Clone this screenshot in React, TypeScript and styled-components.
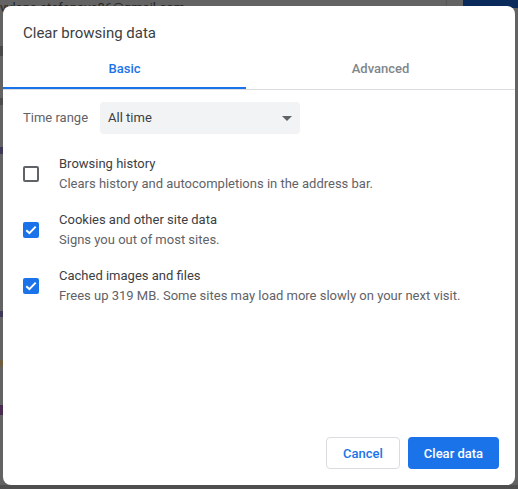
import React from 'react'
import styled, { createGlobalStyle } from 'styled-components'

const GlobalStyle = createGlobalStyle`
  html, body {
    margin: 0;
    padding: 0;
    background: #636363;
  }
  body {
    font-family: Roboto, "Liberation Sans", sans-serif;
  }
`

const items = [
  { title: 'Browsing history', text: 'Clears history and autocompletions in the address bar.', checked: false },
  { title: 'Cookies and other site data', text: 'Signs you out of most sites.', checked: true },
  { title: 'Cached images and files', text: 'Frees up 319 MB. Some sites may load more slowly on your next visit.', checked: true },
]

// bits of the page behind the dialog that show along the left edge
const edgeMarks = [
  { top: 46, height: 10, color: '#4a4a4a' },
  { top: 98, height: 7, color: '#4c4c4c' },
  { top: 147, height: 7, color: '#3f3858' },
  { top: 311, height: 6, color: '#3f3858' },
  { top: 360, height: 7, color: '#6e5f40' },
  { top: 405, height: 10, color: '#4a2c50' },
]

const App = () => {
  return (
    <Page>
      <GlobalStyle />
      <BehindEmail>vylana.stefanova86@gmail.com</BehindEmail>
      <BehindDivider />
      <BehindButton />
      {edgeMarks.map((m) => (
        <EdgeMark key={m.top} $top={m.top} $height={m.height} $color={m.color} />
      ))}
      <Dialog>
        <Title>Clear browsing data</Title>
        <Tabs>
          <Tab $active $width={243}>Basic</Tab>
          <Tab $width={269}>Advanced</Tab>
        </Tabs>
        <Body>
          <RangeRow>
            <RangeLabel>Time range</RangeLabel>
            <Select>
              <SelectValue>All time</SelectValue>
              <Arrow />
            </Select>
          </RangeRow>
          <List>
            {items.map((item) => (
              <Item key={item.title}>
                <Check $checked={item.checked}>
                  {item.checked && (
                    <svg width="12" height="10" viewBox="0 0 12 10">
                      <path d="M1.3 5.2 L4.4 8.2 L10.7 1.6" fill="none" stroke="#fff" strokeWidth="2" />
                    </svg>
                  )}
                </Check>
                <ItemText>
                  <ItemTitle>{item.title}</ItemTitle>
                  <ItemDesc>{item.text}</ItemDesc>
                </ItemText>
              </Item>
            ))}
          </List>
        </Body>
        <Footer>
          <CancelButton>Cancel</CancelButton>
          <ClearButton>Clear data</ClearButton>
        </Footer>
      </Dialog>
    </Page>
  )
}

const Page = styled.div`
  position: relative;
  box-sizing: border-box;
  width: 518px;
  height: 489px;
  padding: 6px 3px 0;
  overflow: hidden;
  background: #636363;
  border-bottom: 4px solid #4f4f4f;
`

const BehindEmail = styled.div`
  position: absolute;
  left: 0;
  top: 0;
  font-size: 13px;
  line-height: 16px;
  color: #262626;
  white-space: nowrap;
`

const BehindDivider = styled.div`
  position: absolute;
  left: 446px;
  top: 0;
  width: 1px;
  height: 8px;
  background: #575757;
`

const BehindButton = styled.div`
  position: absolute;
  right: 0;
  top: 0;
  width: 55px;
  height: 8px;
  background: #0b2a5c;
`

const EdgeMark = styled.div<{ $top: number; $height: number; $color: string }>`
  position: absolute;
  left: 0;
  top: ${(p) => p.$top}px;
  width: 3px;
  height: ${(p) => p.$height}px;
  background: ${(p) => p.$color};
`

const Dialog = styled.div`
  position: relative;
  display: flex;
  flex-direction: column;
  height: 100%;
  border-radius: 8px;
  background: #ffffff;
  overflow: hidden;
`

const Title = styled.div`
  padding: 17px 20px 0;
  height: 23px;
  font-size: 15px;
  line-height: 20px;
  color: #3c4043;
`

const Tabs = styled.div`
  display: flex;
  height: 43px;
  border-bottom: 1px solid #dadce0;
`

const Tab = styled.div<{ $active?: boolean; $width: number }>`
  width: ${(p) => p.$width}px;
  box-sizing: border-box;
  height: 43px;
  padding-top: 13px;
  text-align: center;
  font-size: 13px;
  line-height: 20px;
  font-weight: 500;
  color: ${(p) => (p.$active ? '#1a73e8' : '#80868b')};
  border-bottom: 2px solid ${(p) => (p.$active ? '#1a73e8' : 'transparent')};
`

const Body = styled.div`
  flex: 1;
  padding: 12px 20px 0;
`

const RangeRow = styled.div`
  display: flex;
  align-items: center;
  gap: 12px;
`

const RangeLabel = styled.div`
  margin-bottom: 2px;
  font-size: 13px;
  color: #5f6368;
`

const Select = styled.div`
  display: flex;
  align-items: center;
  justify-content: space-between;
  box-sizing: border-box;
  width: 200px;
  height: 32px;
  padding: 0 8px;
  border-radius: 4px;
  background: #f1f3f4;
  font-size: 13px;
  color: #3c4043;
`

const SelectValue = styled.span`
  margin-bottom: 2px;
`

const Arrow = styled.span`
  width: 0;
  height: 0;
  border-left: 5px solid transparent;
  border-right: 5px solid transparent;
  border-top: 5px solid #5f6368;
`

const List = styled.div`
  display: flex;
  flex-direction: column;
  gap: 16px;
  margin-top: 20px;
`

const Item = styled.div`
  display: flex;
  align-items: center;
  height: 40px;
`

const Check = styled.div<{ $checked: boolean }>`
  display: flex;
  align-items: center;
  justify-content: center;
  box-sizing: border-box;
  width: 16px;
  height: 16px;
  margin-right: 20px;
  border-radius: 2px;
  background: ${(p) => (p.$checked ? '#1a73e8' : '#fff')};
  border: ${(p) => (p.$checked ? 'none' : '2px solid #5f6368')};
`

const ItemText = styled.div`
  display: flex;
  flex-direction: column;
  gap: 1px;
`

const ItemTitle = styled.div`
  font-size: 13px;
  line-height: 19px;
  color: #3c4043;
`

const ItemDesc = styled.div`
  font-size: 13px;
  line-height: 20px;
  color: #5f6368;
`

const Footer = styled.div`
  display: flex;
  justify-content: flex-end;
  gap: 8px;
  padding: 0 16px 16px;
`

const CancelButton = styled.button`
  box-sizing: border-box;
  width: 74px;
  height: 32px;
  padding: 0;
  border: 1px solid #dadce0;
  border-radius: 4px;
  background: #fff;
  color: #1a73e8;
  font: 500 13px Roboto, "Liberation Sans", sans-serif;
`

const ClearButton = styled.button`
  box-sizing: border-box;
  width: 91px;
  height: 32px;
  padding: 0;
  border: none;
  border-radius: 4px;
  background: #1a73e8;
  color: #fff;
  font: 500 13px Roboto, "Liberation Sans", sans-serif;
`

export default App
